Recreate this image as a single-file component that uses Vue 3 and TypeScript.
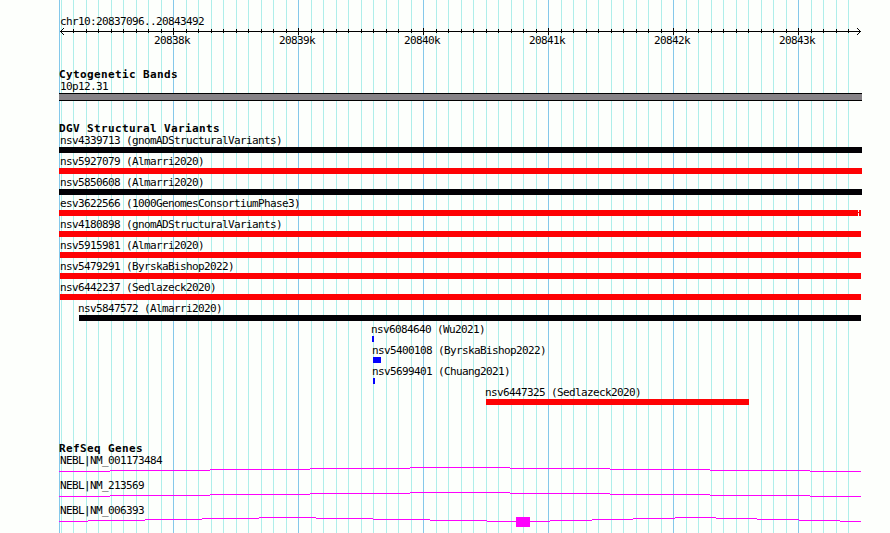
<script setup lang="ts">
interface Variant { label: string; start: number; end: number; color: string; text: number; split?: boolean }
interface Gene { label: string; steps: number[][]; exon?: boolean }

const majors = [173, 298, 423, 548, 673, 798]
const steps = [13, 25, 38, 50, 63, 75, 88, 100, 113]
const minors = [48, ...majors].flatMap(m => steps.map(s => m + s)).filter(x => x < 860)

const variants: Variant[] = [
  { label: 'nsv4339713 (gnomADStructuralVariants)', start: 59, end: 862, color: 'black', text: 60 },
  { label: 'nsv5927079 (Almarri2020)', start: 59, end: 862, color: 'red', text: 60 },
  { label: 'nsv5850608 (Almarri2020)', start: 59, end: 862, color: 'black', text: 60 },
  { label: 'esv3622566 (1000GenomesConsortiumPhase3)', start: 59, end: 861, color: 'red', text: 60, split: true },
  { label: 'nsv4180898 (gnomADStructuralVariants)', start: 59, end: 861, color: 'red', text: 60 },
  { label: 'nsv5915981 (Almarri2020)', start: 60, end: 861, color: 'red', text: 60 },
  { label: 'nsv5479291 (ByrskaBishop2022)', start: 60, end: 861, color: 'red', text: 60 },
  { label: 'nsv6442237 (Sedlazeck2020)', start: 60, end: 861, color: 'red', text: 60 },
  { label: 'nsv5847572 (Almarri2020)', start: 79, end: 861, color: 'black', text: 78 },
  { label: 'nsv6084640 (Wu2021)', start: 372, end: 374, color: 'blue', text: 371 },
  { label: 'nsv5400108 (ByrskaBishop2022)', start: 373, end: 381, color: 'blue', text: 372 },
  { label: 'nsv5699401 (Chuang2021)', start: 373, end: 375, color: 'blue', text: 372 },
  { label: 'nsv6447325 (Sedlazeck2020)', start: 486, end: 749, color: 'red', text: 485 },
]

const wide = [[59, 110, 4], [110, 210, 3], [210, 310, 2], [310, 410, 1], [410, 510, 0], [510, 610, 1], [610, 710, 2], [710, 810, 3], [810, 861, 4]]
const genes: Gene[] = [
  { label: 'NEBL|NM_001173484', steps: wide },
  { label: 'NEBL|NM_213569', steps: wide },
  {
    label: 'NEBL|NM_006393',
    exon: true,
    steps: [[59, 88, 4], [88, 145, 3], [145, 202, 2], [202, 259, 1], [259, 316, 0], [316, 373, 1], [373, 430, 2], [430, 487, 3], [487, 550, 4], [550, 592, 3], [592, 633, 2], [633, 675, 1], [675, 716, 0], [716, 757, 1], [757, 799, 2], [799, 840, 3], [840, 861, 4]],
  },
]
</script>

<template>
  <main class="browser">
    <svg class="grid" width="890" height="533" shape-rendering="crispEdges">
      <rect v-for="x in minors" :key="x" :x="x" y="0" width="1" height="533" class="minor" />
      <rect v-for="x in [59, ...majors]" :key="x" :x="x" y="0" width="1" height="533" class="major" />
    </svg>

    <section class="ruler">
      <div class="label region">chr10:20837096..20843492</div>
      <svg class="axis" width="890" height="9" shape-rendering="crispEdges">
        <rect x="60" y="4" width="801" height="1" />
        <rect v-for="x in minors.slice(1)" :key="x" :x="x" y="2" width="1" height="4" />
        <rect v-for="x in majors" :key="x" :x="x" y="1" width="1" height="7" />
        <path d="M61 3h1v1h-1zM62 2h1v1h-1zM63 1h1v1h-1zM61 5h1v1h-1zM62 6h1v1h-1zM63 7h1v1h-1zM859 3h1v1h-1zM858 2h1v1h-1zM857 1h1v1h-1zM859 5h1v1h-1zM858 6h1v1h-1zM857 7h1v1h-1z" />
      </svg>
      <div class="scale">
        <span v-for="(x, i) in majors" :key="x" class="label tick">{{ 20838 + i }}k</span>
      </div>
    </section>

    <section class="bands">
      <h2>Cytogenetic Bands</h2>
      <div class="label left">10p12.31</div>
      <div class="band"></div>
    </section>

    <section class="variants">
      <h2>DGV Structural Variants</h2>
      <div v-for="v in variants" :key="v.label" class="variant">
        <div class="label" :style="{ paddingLeft: v.text + 'px' }">{{ v.label }}</div>
        <div class="bar" :class="[v.color, { split: v.split }]" :style="{ marginLeft: v.start + 'px', width: v.end - v.start + 'px' }"></div>
      </div>
    </section>

    <section class="genes">
      <h2>RefSeq Genes</h2>
      <div v-for="g in genes" :key="g.label" class="gene">
        <div class="label left">{{ g.label }}</div>
        <svg class="intron" width="890" height="11" shape-rendering="crispEdges">
          <rect v-for="s in g.steps" :key="s[0]" :x="s[0]" :y="s[2]" :width="s[1] - s[0]" height="1" />
          <rect v-if="g.exon" x="516" y="0" width="14" height="10" />
        </svg>
      </div>
    </section>
  </main>
</template>

<style>
body { background: #fdfffc; }
</style>

<style scoped>
.browser {
  position: relative;
  width: 890px;
  height: 533px;
  overflow: hidden;
  background: #fdfffc;
  color: #000;
  font-family: "DejaVu Sans Mono", monospace;
}
.grid { position: absolute; left: 0; top: 0; }
.minor { fill: #aeeeea; }
.major { fill: #84c8ea; }
section { position: relative; }
svg { display: block; }
.label {
  height: 13px;
  font-size: 11px;
  line-height: 13px;
  letter-spacing: -0.623px;
  white-space: pre;
}
h2 {
  margin: 0;
  padding-left: 59px;
  height: 12px;
  font-size: 11px;
  line-height: 14px;
  letter-spacing: 0.377px;
  font-weight: bold;
  white-space: pre;
}
.ruler { height: 68px; padding-top: 15px; box-sizing: border-box; }
.region, .left { padding-left: 60px; }
.axis { margin-top: -1px; }
.scale { display: flex; padding-left: 154px; margin-top: -2px; }
.tick { flex: 0 0 125px; }
.bands { height: 54px; }
.band {
  height: 6px;
  margin: 0 28px 0 59px;
  border-top: 1px solid #000;
  border-bottom: 1px solid #000;
  background: #868286;
}
.variants { height: 320px; }
.variant { height: 21px; }
.bar { height: 6px; }
.black { background: #020004; }
.red { background: #fe0204; }
.blue { background: #0402fe; }
.split {
  background: linear-gradient(#fe0204, #fe0204) 0 0 / 799px 6px no-repeat,
    linear-gradient(#fe0204, #fe0204) 100% 0 / 2px 6px no-repeat,
    linear-gradient(#fe0204, #fe0204) 0 2px / 100% 1px no-repeat;
}
.gene { height: 25px; }
.intron { fill: #fe02fc; }
</style>
